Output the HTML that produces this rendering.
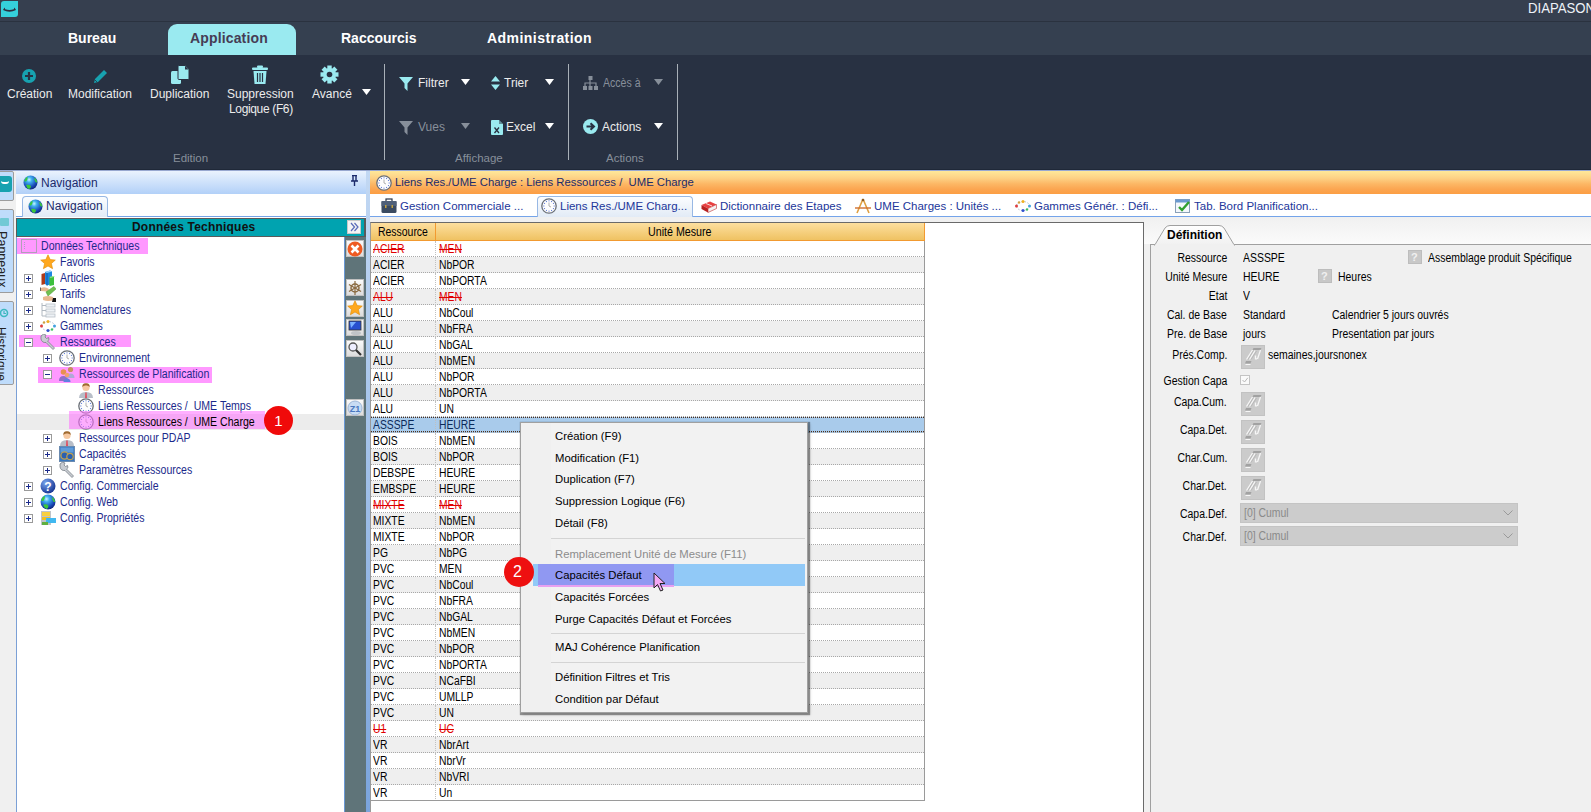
<!DOCTYPE html>
<html><head><meta charset="utf-8"><style>
*{box-sizing:border-box;margin:0;padding:0}
html,body{width:1591px;height:812px;overflow:hidden;background:#f0f0f0;font-family:"Liberation Sans",sans-serif;position:relative}
.a{position:absolute}
.t{position:absolute;white-space:nowrap;line-height:1}
.tab{font-weight:bold;font-size:14px}
</style></head><body>
<div class="a" style="left:0;top:0;width:1591px;height:21px;background:#363f4f"></div>
<div class="a" style="left:0;top:21px;width:1591px;height:1px;background:#2a323f"></div>
<svg class="a" style="left:1px;top:1px" width="17" height="16"><path d="M0 3Q0 0 3 0H17V13Q17 16 14 16H0Z" fill="#35d0dc"/><path d="M3.5 6.5L4.2 8.2Q8.5 9.8 12.8 8.2L13.5 6.5L15 9Q8.5 12.5 2 9Z" fill="#2c2f40"/></svg>
<div class="t" style="left:1528px;top:1px;font-size:14px;color:#eef2f8;transform:scaleX(0.94);transform-origin:0 0">DIAPASON</div>
<div class="a" style="left:0;top:22px;width:1591px;height:33px;background:#354050"></div>
<div class="a" style="left:168px;top:24px;width:127.5px;height:32px;background:#9aeaf0;border-radius:9px 9px 0 0"></div>
<div class="t tab" style="left:68px;top:31px;color:#fff;letter-spacing:0px">Bureau</div>
<div class="t tab" style="left:190px;top:31px;color:#463c55;letter-spacing:0.15px">Application</div>
<div class="t tab" style="left:341px;top:31px;color:#fff;letter-spacing:0px">Raccourcis</div>
<div class="t tab" style="left:487px;top:31px;color:#fff;letter-spacing:0.45px">Administration</div>
<div class="a" style="left:0;top:55px;width:1591px;height:115px;background:#283142"></div>
<div class="a" style="left:384px;top:64px;width:1px;height:96px;background:#a9b0b8"></div>
<div class="a" style="left:568px;top:64px;width:1px;height:96px;background:#a9b0b8"></div>
<div class="a" style="left:677px;top:64px;width:1px;height:96px;background:#a9b0b8"></div>
<svg class="a" style="left:22px;top:69px" width="14" height="14"><circle cx="7" cy="7" r="7" fill="#17a2b0"/><path d="M7 3V11M3 7H11" stroke="#283142" stroke-width="2.2"/></svg>
<div class="t" style="left:7px;top:88px;font-size:12px;color:#ececec;">Création</div>
<svg class="a" style="left:93px;top:68px" width="16" height="16"><path d="M1 15L2 11L11 2L14 5L5 14Z" fill="#17a2b0"/><path d="M2.2 12.2L3.8 13.8" stroke="#283142" stroke-width="1"/></svg>
<div class="t" style="left:68px;top:88px;font-size:12px;color:#ececec;">Modification</div>
<svg class="a" style="left:170px;top:65px" width="20" height="20"><rect x="1" y="6" width="10" height="13" rx="1.5" fill="#9aeaf0"/><path d="M8 1.5Q8 0.5 9 0.5H15L19 4.5V13.5Q19 14.5 18 14.5H9Q8 14.5 8 13.5Z" fill="#9aeaf0" stroke="#283142" stroke-width="1"/><path d="M15 1V4.5H18.5" fill="#283142"/></svg>
<div class="t" style="left:150px;top:88px;font-size:12px;color:#ececec;">Duplication</div>
<svg class="a" style="left:251px;top:65px" width="18" height="20"><rect x="1" y="2.5" width="16" height="2.5" rx="1" fill="#9aeaf0"/><rect x="6" y="0.5" width="6" height="2.5" rx="1" fill="#9aeaf0"/><path d="M2.5 6H15.5L14.5 19H3.5Z" fill="#9aeaf0"/><path d="M6.5 8V17M9 8V17M11.5 8V17" stroke="#283142" stroke-width="1.2"/></svg>
<div class="t" style="left:227px;top:88px;font-size:12px;color:#ececec;">Suppression</div>
<div class="t" style="left:229px;top:103px;font-size:12px;color:#ececec;letter-spacing:-0.35px">Logique (F6)</div>
<svg class="a" style="left:320px;top:65px" width="19" height="19" viewBox="-9.5 -9.5 19 19"><g fill="#9aeaf0"><rect x="-2.2" y="-9" width="4.4" height="5" transform="rotate(0)"/><rect x="-2.2" y="-9" width="4.4" height="5" transform="rotate(45)"/><rect x="-2.2" y="-9" width="4.4" height="5" transform="rotate(90)"/><rect x="-2.2" y="-9" width="4.4" height="5" transform="rotate(135)"/><rect x="-2.2" y="-9" width="4.4" height="5" transform="rotate(180)"/><rect x="-2.2" y="-9" width="4.4" height="5" transform="rotate(225)"/><rect x="-2.2" y="-9" width="4.4" height="5" transform="rotate(270)"/><rect x="-2.2" y="-9" width="4.4" height="5" transform="rotate(315)"/><circle r="6.5"/></g><circle r="2.8" fill="#283142"/></svg>
<div class="t" style="left:312px;top:88px;font-size:12px;color:#ececec;">Avancé</div>
<svg class="a" style="left:362px;top:89px" width="9" height="6"><path d="M0 0H9L4.5 6Z" fill="#fff"/></svg>
<svg class="a" style="left:399px;top:77px" width="14" height="14"><path d="M0 0H14L8.5 6.5V14L5.5 11V6.5Z" fill="#9aeaf0"/></svg>
<div class="t" style="left:418px;top:77px;font-size:12px;color:#ececec;">Filtrer</div>
<svg class="a" style="left:461px;top:79px" width="9" height="6"><path d="M0 0H9L4.5 6Z" fill="#fff"/></svg>
<svg class="a" style="left:491px;top:76px" width="9" height="14"><path d="M4.5 0L9 5.5H0Z M4.5 14L9 8.5H0Z" fill="#9aeaf0"/></svg>
<div class="t" style="left:504px;top:77px;font-size:12px;color:#ececec;">Trier</div>
<svg class="a" style="left:545px;top:79px" width="9" height="6"><path d="M0 0H9L4.5 6Z" fill="#fff"/></svg>
<svg class="a" style="left:399px;top:121px" width="14" height="14"><path d="M0 0H14L8.5 6.5V14L5.5 11V6.5Z" fill="#878f9a"/></svg>
<div class="t" style="left:418px;top:121px;font-size:12px;color:#878f9a;">Vues</div>
<svg class="a" style="left:461px;top:123px" width="9" height="6"><path d="M0 0H9L4.5 6Z" fill="#878f9a"/></svg>
<svg class="a" style="left:491px;top:120px" width="12" height="15"><path d="M0 1Q0 0 1 0H8L12 4V14Q12 15 11 15H1Q0 15 0 14Z" fill="#9aeaf0"/><path d="M8 0V4H12" fill="#283142" opacity="0.5"/><path d="M3.5 7.5L8 13M8 7.5L3.5 13" stroke="#283142" stroke-width="1.3"/></svg>
<div class="t" style="left:506px;top:121px;font-size:12px;color:#ececec;">Excel</div>
<svg class="a" style="left:545px;top:123px" width="9" height="6"><path d="M0 0H9L4.5 6Z" fill="#fff"/></svg>
<svg class="a" style="left:583px;top:76px" width="15" height="14"><g fill="#878f9a"><rect x="5.5" y="0" width="4" height="4"/><rect x="0" y="10" width="4" height="4"/><rect x="5.5" y="10" width="4" height="4"/><rect x="11" y="10" width="4" height="4"/><path d="M7 4V10M2 10V7H13V10" stroke="#878f9a" stroke-width="1.2" fill="none"/></g></svg>
<div class="t" style="left:603px;top:77px;font-size:12px;color:#878f9a;transform:scaleX(0.88);transform-origin:0 0">Accès à</div>
<svg class="a" style="left:654px;top:79px" width="9" height="6"><path d="M0 0H9L4.5 6Z" fill="#878f9a"/></svg>
<svg class="a" style="left:583px;top:119px" width="15" height="15"><circle cx="7.5" cy="7.5" r="7.5" fill="#9aeaf0"/><path d="M3.5 7.5H10.5M7.5 4.2L11 7.5L7.5 10.8" stroke="#283142" stroke-width="2" fill="none"/></svg>
<div class="t" style="left:602px;top:121px;font-size:12px;color:#ececec;">Actions</div>
<svg class="a" style="left:654px;top:123px" width="9" height="6"><path d="M0 0H9L4.5 6Z" fill="#fff"/></svg>
<div class="t" style="left:173px;top:152.5px;font-size:11.5px;color:#878f9a;">Edition</div>
<div class="t" style="left:455px;top:152.5px;font-size:11.5px;color:#878f9a;">Affichage</div>
<div class="t" style="left:606px;top:152.5px;font-size:11.5px;color:#878f9a;">Actions</div>
<div class="a" style="left:0;top:170px;width:16px;height:642px;background:#f0f0f0"></div>
<div class="a" style="left:-3px;top:171px;width:17px;height:30px;background:#bfdcfb;border:1px solid #9c9c9c;border-radius:2px"></div>
<div class="a" style="left:0;top:176px;width:12px;height:16px;background:#17a2b0;border-radius:0 3px 3px 0"></div>
<div class="a" style="left:1px;top:181px;width:8px;height:3px;border-bottom:2px solid #fff;border-radius:0 0 4px 4px"></div>
<div class="a" style="left:-3px;top:209px;width:17px;height:84px;background:#bfdcfb;border:1px solid #9c9c9c;border-radius:2px"></div>
<div class="a" style="left:0;top:218px;width:9px;height:8px;background:#5ec4cc;border-radius:1px;opacity:0.8"></div>
<div class="t" style="left:-26px;top:253px;font-size:12.5px;color:#222;transform:rotate(90deg);transform-origin:center">Panneaux</div>
<div class="a" style="left:-3px;top:301px;width:17px;height:84px;background:#bfdcfb;border:1px solid #9c9c9c;border-radius:2px"></div>
<svg class="a" style="left:0;top:307px" width="10" height="12"><circle cx="4" cy="6" r="3.5" fill="none" stroke="#3cb8c0" stroke-width="1.6"/><path d="M4 4V6.5H6" stroke="#3cb8c0" stroke-width="1.2" fill="none"/></svg>
<div class="t" style="left:-26px;top:348px;font-size:12px;color:#222;transform:rotate(90deg);transform-origin:center">Historique</div>
<div class="a" style="left:16px;top:171px;width:350px;height:23px;background:linear-gradient(#eaf3fe,#b2d0f8)"></div>
<svg class="a" style="left:23px;top:175px" width="15" height="15" viewBox="0 0 15 15"><defs><radialGradient id="gg1" cx="0.4" cy="0.3" r="0.75"><stop offset="0" stop-color="#c8f4ff"/><stop offset="0.25" stop-color="#40b0f0"/><stop offset="0.7" stop-color="#1a4ab8"/><stop offset="1" stop-color="#0a1e70"/></radialGradient></defs><circle cx="7.5" cy="7.5" r="7" fill="url(#gg1)"/><path d="M1.2 6Q2 3 4.5 1.5Q5 4 3.5 6Q2.5 7 1.2 6Z M3 10Q6 9 8 11Q8 13.5 6 14Q3.5 13 3 10Z M11.5 2.5Q14 4.5 14.3 7.5Q12.5 8 12 6Q11 4 11.5 2.5Z" fill="#3cc83c"/></svg>
<div class="t" style="left:41px;top:177px;font-size:12px;color:#1b2a6b">Navigation</div>
<svg class="a" style="left:350px;top:175px" width="9" height="11"><path d="M2 0.5H7M3 0.5V6M6 0.5V6M1 6H8M4.5 6V11" stroke="#1b2a6b" stroke-width="1.4" fill="none"/></svg>
<div class="a" style="left:16px;top:194px;width:350px;height:23px;background:#fff"></div>
<div class="a" style="left:16px;top:216px;width:350px;height:1px;background:#74a4ea"></div>
<div class="a" style="left:22px;top:196px;width:86px;height:21px;background:linear-gradient(#fbfdff,#e2ebf6);border:1px solid #98b8e4;border-bottom:none;border-radius:4px 4px 0 0"></div>
<svg class="a" style="left:28px;top:199px" width="15" height="15" viewBox="0 0 15 15"><defs><radialGradient id="gg2" cx="0.4" cy="0.3" r="0.75"><stop offset="0" stop-color="#c8f4ff"/><stop offset="0.25" stop-color="#40b0f0"/><stop offset="0.7" stop-color="#1a4ab8"/><stop offset="1" stop-color="#0a1e70"/></radialGradient></defs><circle cx="7.5" cy="7.5" r="7" fill="url(#gg2)"/><path d="M1.2 6Q2 3 4.5 1.5Q5 4 3.5 6Q2.5 7 1.2 6Z M3 10Q6 9 8 11Q8 13.5 6 14Q3.5 13 3 10Z M11.5 2.5Q14 4.5 14.3 7.5Q12.5 8 12 6Q11 4 11.5 2.5Z" fill="#3cc83c"/></svg>
<div class="t" style="left:46px;top:200px;font-size:12px;color:#1b2a6b">Navigation</div>
<div class="a" style="left:16px;top:217px;width:350px;height:1px;background:#fff"></div>
<div class="a" style="left:16px;top:218px;width:350px;height:19px;background:#00a3b0;border:1px solid #5a5a5a;border-right:2px solid #5a5a5a"></div>
<div class="t" style="left:132px;top:221px;font-size:12px;font-weight:bold;color:#111;letter-spacing:0.2px">Données Techniques</div>
<div class="a" style="left:347px;top:220px;width:14px;height:14px;background:#f4f4f4;border:1px solid #c8c8c8"></div>
<svg class="a" style="left:349px;top:221px" width="11" height="12"><path d="M2 2L5.5 6L2 10M5.5 2L9 6L5.5 10" stroke="#5a6ab8" stroke-width="1.2" fill="none"/></svg>
<div class="a" style="left:16px;top:237px;width:328px;height:575px;background:#fff;border-left:1px solid #7ba0d6"></div>
<div class="a" style="left:17px;top:414px;width:327px;height:16px;background:#ececec"></div>
<div class="a" style="left:344px;top:237px;width:22px;height:575px;background:#5f7479;border-left:1px solid #6a98d4"></div>
<div class="a" style="left:366px;top:170px;width:4px;height:642px;background:linear-gradient(#c2d8f3,#7aa4dc)"></div>
<div class="a" style="left:346px;top:240px;width:18px;height:17px;background:linear-gradient(#fafafa,#dcdcdc);border:1px solid #c0c0c0"></div>
<div class="a" style="left:346px;top:279px;width:18px;height:17px;background:linear-gradient(#fafafa,#dcdcdc);border:1px solid #c0c0c0"></div>
<div class="a" style="left:346px;top:300px;width:18px;height:17px;background:linear-gradient(#fafafa,#dcdcdc);border:1px solid #c0c0c0"></div>
<div class="a" style="left:346px;top:319px;width:18px;height:17px;background:linear-gradient(#fafafa,#dcdcdc);border:1px solid #c0c0c0"></div>
<div class="a" style="left:346px;top:340px;width:18px;height:17px;background:linear-gradient(#fafafa,#dcdcdc);border:1px solid #c0c0c0"></div>
<div class="a" style="left:346px;top:399px;width:18px;height:17px;background:linear-gradient(#fafafa,#dcdcdc);border:1px solid #c0c0c0"></div>
<svg class="a" style="left:347px;top:241px" width="16" height="16"><circle cx="8" cy="8" r="7.5" fill="#ee5a22"/><path d="M4.5 4.5L11.5 11.5M11.5 4.5L4.5 11.5" stroke="#fff" stroke-width="2.6"/></svg>
<svg class="a" style="left:347px;top:280px" width="16" height="16"><circle cx="8" cy="8" r="4" fill="none" stroke="#8a6a40" stroke-width="1.5"/><rect x="7.4" y="1" width="1.2" height="14" fill="#8a6a40" transform="rotate(0 8 8)"/><rect x="7.4" y="1" width="1.2" height="14" fill="#8a6a40" transform="rotate(60 8 8)"/><rect x="7.4" y="1" width="1.2" height="14" fill="#8a6a40" transform="rotate(120 8 8)"/></svg>
<svg class="a" style="left:347px;top:300px" width="16" height="16" viewBox="0 0 16 16"><path d="M8 0.8L10.2 5.6L15.3 6.1L11.4 9.5L12.6 14.7L8 12L3.4 14.7L4.6 9.5L0.7 6.1L5.8 5.6Z" fill="#ffa81e" stroke="#e08a00" stroke-width="0.6"/></svg>
<svg class="a" style="left:347px;top:320px" width="16" height="16"><rect x="2" y="1" width="12" height="9" fill="#2850d0" stroke="#333" stroke-width="0.8"/><path d="M3 2L9 2L4 8Z" fill="#7ab0ff"/><ellipse cx="9" cy="13" rx="5" ry="2" fill="#c0c4c8"/></svg>
<svg class="a" style="left:347px;top:341px" width="16" height="16"><circle cx="6" cy="6" r="4" fill="#eef" stroke="#555" stroke-width="1.3"/><path d="M9 9L14 14" stroke="#333" stroke-width="2.2"/></svg>
<svg class="a" style="left:347px;top:400px" width="16" height="16"><circle cx="8" cy="8" r="7" fill="#c8dcf4" stroke="#a0b8d8"/><text x="8" y="11.5" font-family="Liberation Sans" font-weight="bold" font-size="9" fill="#4a78c0" text-anchor="middle">Z1</text></svg>
<div class="a" style="left:17px;top:238px;width:131px;height:16px;background:#ff99ff"></div>
<div class="a" style="left:19px;top:335px;width:112px;height:12px;background:#ff99ff"></div>
<div class="a" style="left:38px;top:367px;width:174px;height:16px;background:#ff99ff"></div>
<svg class="a" style="left:21px;top:238px" width="16" height="16"><rect x="0.5" y="1.5" width="15" height="13" fill="none" stroke="#b0a0b8" stroke-width="1"/><path d="M3.5 4V12" stroke="#b0a0c8" stroke-width="1" stroke-dasharray="1 1"/></svg>
<div class="t" style="left:41px;top:239.6px;font-size:12px;transform:scaleX(0.88);transform-origin:0 0;color:#1b2a8b">Données Techniques</div>
<svg class="a" style="left:40px;top:254px" width="16" height="16" viewBox="0 0 16 16"><path d="M8 0.8L10.2 5.6L15.3 6.1L11.4 9.5L12.6 14.7L8 12L3.4 14.7L4.6 9.5L0.7 6.1L5.8 5.6Z" fill="#ffa81e" stroke="#e08a00" stroke-width="0.6"/></svg>
<div class="t" style="left:60px;top:255.6px;font-size:12px;transform:scaleX(0.88);transform-origin:0 0;color:#1b2a8b">Favoris</div>
<div class="a" style="left:24px;top:274px;width:9px;height:9px;border:1px solid #9a9a9a;background:#fff"></div>
<div class="a" style="left:26px;top:278px;width:5px;height:1px;background:#1b2a8b"></div>
<div class="a" style="left:28px;top:276px;width:1px;height:5px;background:#1b2a8b"></div>
<svg class="a" style="left:40px;top:270px" width="16" height="16"><path d="M1.5 4L5 3V14L1.5 15Z" fill="#b03a18"/><path d="M5 2L10 0.5L12 1.5V14L7 15.5L5 14Z" fill="#1e88e0"/><path d="M5 2L10 0.5L12 1.5L7 3Z" fill="#9ad0f8"/><path d="M7 3V15.5" stroke="#0a50a0" stroke-width="0.8"/><path d="M9.5 7L14 6V15L9.5 16Z" fill="#3cc03c"/><path d="M9.5 7L14 6L15 6.8L10.5 7.8Z" fill="#b0f0a0"/></svg>
<div class="t" style="left:60px;top:271.6px;font-size:12px;transform:scaleX(0.88);transform-origin:0 0;color:#1b2a8b">Articles</div>
<div class="a" style="left:24px;top:290px;width:9px;height:9px;border:1px solid #9a9a9a;background:#fff"></div>
<div class="a" style="left:26px;top:294px;width:5px;height:1px;background:#1b2a8b"></div>
<div class="a" style="left:28px;top:292px;width:1px;height:5px;background:#1b2a8b"></div>
<svg class="a" style="left:40px;top:286px" width="16" height="16"><path d="M0 1.5V5" stroke="#111" stroke-width="1.3"/><path d="M1 2Q5 0 9 3L8 6Q4 5 1 5Z" fill="#e8b890"/><path d="M6 6L14 0.5L16 3L8 10Z" fill="#70c050" stroke="#4a9a30" stroke-width="0.5"/><path d="M3 11Q8 9 13 11L14 14Q8 16 3 14Z" fill="#e8b890"/><path d="M13 12L16 12V16H12Z" fill="#111"/></svg>
<div class="t" style="left:60px;top:287.6px;font-size:12px;transform:scaleX(0.88);transform-origin:0 0;color:#1b2a8b">Tarifs</div>
<div class="a" style="left:24px;top:306px;width:9px;height:9px;border:1px solid #9a9a9a;background:#fff"></div>
<div class="a" style="left:26px;top:310px;width:5px;height:1px;background:#1b2a8b"></div>
<div class="a" style="left:28px;top:308px;width:1px;height:5px;background:#1b2a8b"></div>
<svg class="a" style="left:40px;top:302px" width="16" height="16"><rect x="6" y="2" width="9" height="3" fill="#eef2f6" stroke="#b8c0c8" stroke-width="0.8"/><rect x="6" y="7" width="9" height="3" fill="#eef2f6" stroke="#b8c0c8" stroke-width="0.8"/><rect x="6" y="12" width="9" height="3" fill="#eef2f6" stroke="#b8c0c8" stroke-width="0.8"/><path d="M2 1V14H6M2 8.5H6M2 3.5H6" stroke="#b0b8c0" stroke-width="1" fill="none"/></svg>
<div class="t" style="left:60px;top:303.6px;font-size:12px;transform:scaleX(0.88);transform-origin:0 0;color:#1b2a8b">Nomenclatures</div>
<div class="a" style="left:24px;top:322px;width:9px;height:9px;border:1px solid #9a9a9a;background:#fff"></div>
<div class="a" style="left:26px;top:326px;width:5px;height:1px;background:#1b2a8b"></div>
<div class="a" style="left:28px;top:324px;width:1px;height:5px;background:#1b2a8b"></div>
<svg class="a" style="left:40px;top:318px" width="16" height="16"><ellipse cx="8" cy="8" rx="6.5" ry="4.5" fill="none" stroke="#b0c0d0" stroke-width="1" stroke-dasharray="1.5 1.5"/><circle cx="1.5" cy="8" r="1.5" fill="#e04040"/><circle cx="14.5" cy="8" r="1.5" fill="#40a0e0"/><circle cx="8" cy="3.5" r="1.5" fill="#f0b020"/><circle cx="8" cy="12.5" r="1.5" fill="#3050d0"/><circle cx="4" cy="4.5" r="1.2" fill="#d0a040"/><circle cx="12" cy="11.5" r="1.2" fill="#40c060"/></svg>
<div class="t" style="left:60px;top:319.6px;font-size:12px;transform:scaleX(0.88);transform-origin:0 0;color:#1b2a8b">Gammes</div>
<div class="a" style="left:24px;top:338px;width:9px;height:9px;border:1px solid #9a9a9a;background:#fff"></div>
<div class="a" style="left:26px;top:342px;width:5px;height:1px;background:#1b2a8b"></div>
<svg class="a" style="left:40px;top:334px" width="16" height="16"><path d="M1 2Q3 -1 6 1L5 3L6.5 4.5L8.5 3.5Q10 6 7.5 7L14.5 14L13 15.5L6 8.5Q2 9 1 5Z" fill="#c8ccd2" stroke="#7a8088" stroke-width="0.8"/></svg>
<div class="t" style="left:60px;top:335.6px;font-size:12px;transform:scaleX(0.88);transform-origin:0 0;color:#1b2a8b">Ressources</div>
<div class="a" style="left:43px;top:354px;width:9px;height:9px;border:1px solid #9a9a9a;background:#fff"></div>
<div class="a" style="left:45px;top:358px;width:5px;height:1px;background:#1b2a8b"></div>
<div class="a" style="left:47px;top:356px;width:1px;height:5px;background:#1b2a8b"></div>
<svg class="a" style="left:59px;top:350px" width="16" height="16" viewBox="0 0 16 16"><circle cx="8" cy="8" r="7.2" fill="#fdfdfd" stroke="#6b7078" stroke-width="1.3"/><rect x="7.6" y="2.2" width="0.8" height="1.2" fill="#4a6ad0" transform="rotate(0 8 8)"/><rect x="7.6" y="2.2" width="0.8" height="1.2" fill="#4a6ad0" transform="rotate(30 8 8)"/><rect x="7.6" y="2.2" width="0.8" height="1.2" fill="#4a6ad0" transform="rotate(60 8 8)"/><rect x="7.6" y="2.2" width="0.8" height="1.2" fill="#4a6ad0" transform="rotate(90 8 8)"/><rect x="7.6" y="2.2" width="0.8" height="1.2" fill="#4a6ad0" transform="rotate(120 8 8)"/><rect x="7.6" y="2.2" width="0.8" height="1.2" fill="#4a6ad0" transform="rotate(150 8 8)"/><rect x="7.6" y="2.2" width="0.8" height="1.2" fill="#4a6ad0" transform="rotate(180 8 8)"/><rect x="7.6" y="2.2" width="0.8" height="1.2" fill="#4a6ad0" transform="rotate(210 8 8)"/><rect x="7.6" y="2.2" width="0.8" height="1.2" fill="#4a6ad0" transform="rotate(240 8 8)"/><rect x="7.6" y="2.2" width="0.8" height="1.2" fill="#4a6ad0" transform="rotate(270 8 8)"/><rect x="7.6" y="2.2" width="0.8" height="1.2" fill="#4a6ad0" transform="rotate(300 8 8)"/><rect x="7.6" y="2.2" width="0.8" height="1.2" fill="#4a6ad0" transform="rotate(330 8 8)"/><path d="M8 8V4.5M8 8L10 9" stroke="#999" stroke-width="0.8"/></svg>
<div class="t" style="left:79px;top:351.6px;font-size:12px;transform:scaleX(0.88);transform-origin:0 0;color:#1b2a8b">Environnement</div>
<div class="a" style="left:43px;top:370px;width:9px;height:9px;border:1px solid #9a9a9a;background:#fff"></div>
<div class="a" style="left:45px;top:374px;width:5px;height:1px;background:#1b2a8b"></div>
<svg class="a" style="left:59px;top:366px" width="16" height="16"><circle cx="4.5" cy="6" r="2.8" fill="#e89050"/><path d="M0 15Q0 10 4.5 10Q9 10 9 15Z" fill="#9070c8"/><circle cx="11.5" cy="3.5" r="2.6" fill="#c89060"/><path d="M7.5 12Q7.5 7.5 11.5 7.5Q15.5 7.5 15.5 12Z" fill="#b0a8d8"/><circle cx="8" cy="9" r="2.3" fill="#f0a070"/><path d="M4.5 16Q4.5 12.5 8 12.5Q11.5 12.5 11.5 16Z" fill="#6080e0"/></svg>
<div class="t" style="left:79px;top:367.6px;font-size:12px;transform:scaleX(0.88);transform-origin:0 0;color:#1b2a8b">Ressources de Planification</div>
<svg class="a" style="left:78px;top:382px" width="16" height="16"><path d="M1 16Q1 10 8 10Q15 10 15 16Z" fill="#b8bec8"/><path d="M7.3 10.5H8.7L9 16H7Z" fill="#e05060"/><circle cx="8" cy="5.5" r="3.6" fill="#f6c8a0"/><path d="M4.3 5Q4 1 8 1.2Q12 1 11.7 5Q10 3 8 3.5Q6 3 4.3 5Z" fill="#a06a30"/></svg>
<div class="t" style="left:98px;top:383.6px;font-size:12px;transform:scaleX(0.88);transform-origin:0 0;color:#1b2a8b">Ressources</div>
<svg class="a" style="left:78px;top:398px" width="16" height="16" viewBox="0 0 16 16"><circle cx="8" cy="8" r="7.2" fill="#fdfdfd" stroke="#6b7078" stroke-width="1.3"/><rect x="7.6" y="2.2" width="0.8" height="1.2" fill="#4a6ad0" transform="rotate(0 8 8)"/><rect x="7.6" y="2.2" width="0.8" height="1.2" fill="#4a6ad0" transform="rotate(30 8 8)"/><rect x="7.6" y="2.2" width="0.8" height="1.2" fill="#4a6ad0" transform="rotate(60 8 8)"/><rect x="7.6" y="2.2" width="0.8" height="1.2" fill="#4a6ad0" transform="rotate(90 8 8)"/><rect x="7.6" y="2.2" width="0.8" height="1.2" fill="#4a6ad0" transform="rotate(120 8 8)"/><rect x="7.6" y="2.2" width="0.8" height="1.2" fill="#4a6ad0" transform="rotate(150 8 8)"/><rect x="7.6" y="2.2" width="0.8" height="1.2" fill="#4a6ad0" transform="rotate(180 8 8)"/><rect x="7.6" y="2.2" width="0.8" height="1.2" fill="#4a6ad0" transform="rotate(210 8 8)"/><rect x="7.6" y="2.2" width="0.8" height="1.2" fill="#4a6ad0" transform="rotate(240 8 8)"/><rect x="7.6" y="2.2" width="0.8" height="1.2" fill="#4a6ad0" transform="rotate(270 8 8)"/><rect x="7.6" y="2.2" width="0.8" height="1.2" fill="#4a6ad0" transform="rotate(300 8 8)"/><rect x="7.6" y="2.2" width="0.8" height="1.2" fill="#4a6ad0" transform="rotate(330 8 8)"/><path d="M8 8V4.5M8 8L10 9" stroke="#999" stroke-width="0.8"/></svg>
<div class="t" style="left:98px;top:399.6px;font-size:12px;transform:scaleX(0.88);transform-origin:0 0;color:#1b2a8b">Liens Ressources / &nbsp;UME Temps</div>
<svg class="a" style="left:78px;top:414px" width="16" height="16" viewBox="0 0 16 16"><circle cx="8" cy="8" r="7.2" fill="#fdfdfd" stroke="#6b7078" stroke-width="1.3"/><rect x="7.6" y="2.2" width="0.8" height="1.2" fill="#4a6ad0" transform="rotate(0 8 8)"/><rect x="7.6" y="2.2" width="0.8" height="1.2" fill="#4a6ad0" transform="rotate(30 8 8)"/><rect x="7.6" y="2.2" width="0.8" height="1.2" fill="#4a6ad0" transform="rotate(60 8 8)"/><rect x="7.6" y="2.2" width="0.8" height="1.2" fill="#4a6ad0" transform="rotate(90 8 8)"/><rect x="7.6" y="2.2" width="0.8" height="1.2" fill="#4a6ad0" transform="rotate(120 8 8)"/><rect x="7.6" y="2.2" width="0.8" height="1.2" fill="#4a6ad0" transform="rotate(150 8 8)"/><rect x="7.6" y="2.2" width="0.8" height="1.2" fill="#4a6ad0" transform="rotate(180 8 8)"/><rect x="7.6" y="2.2" width="0.8" height="1.2" fill="#4a6ad0" transform="rotate(210 8 8)"/><rect x="7.6" y="2.2" width="0.8" height="1.2" fill="#4a6ad0" transform="rotate(240 8 8)"/><rect x="7.6" y="2.2" width="0.8" height="1.2" fill="#4a6ad0" transform="rotate(270 8 8)"/><rect x="7.6" y="2.2" width="0.8" height="1.2" fill="#4a6ad0" transform="rotate(300 8 8)"/><rect x="7.6" y="2.2" width="0.8" height="1.2" fill="#4a6ad0" transform="rotate(330 8 8)"/><path d="M8 8V4.5M8 8L10 9" stroke="#999" stroke-width="0.8"/></svg>
<div class="a" style="left:69px;top:411px;width:196px;height:18px;background:rgba(255,110,255,0.55)"></div>
<div class="t" style="left:98px;top:415.6px;font-size:12px;transform:scaleX(0.88);transform-origin:0 0;color:#000">Liens Ressources / &nbsp;UME Charge</div>
<div class="a" style="left:43px;top:434px;width:9px;height:9px;border:1px solid #9a9a9a;background:#fff"></div>
<div class="a" style="left:45px;top:438px;width:5px;height:1px;background:#1b2a8b"></div>
<div class="a" style="left:47px;top:436px;width:1px;height:5px;background:#1b2a8b"></div>
<svg class="a" style="left:59px;top:430px" width="16" height="16"><path d="M1 16Q1 10 8 10Q15 10 15 16Z" fill="#b8bec8"/><path d="M7.3 10.5H8.7L9 16H7Z" fill="#e05060"/><circle cx="8" cy="5.5" r="3.6" fill="#f6c8a0"/><path d="M4.3 5Q4 1 8 1.2Q12 1 11.7 5Q10 3 8 3.5Q6 3 4.3 5Z" fill="#a06a30"/></svg>
<div class="t" style="left:79px;top:431.6px;font-size:12px;transform:scaleX(0.88);transform-origin:0 0;color:#1b2a8b">Ressources pour PDAP</div>
<div class="a" style="left:43px;top:450px;width:9px;height:9px;border:1px solid #9a9a9a;background:#fff"></div>
<div class="a" style="left:45px;top:454px;width:5px;height:1px;background:#1b2a8b"></div>
<div class="a" style="left:47px;top:452px;width:1px;height:5px;background:#1b2a8b"></div>
<svg class="a" style="left:59px;top:446px" width="16" height="16"><rect x="0.5" y="0.5" width="15" height="15" fill="#3a78c0" stroke="#6a8ab0"/><rect x="1.5" y="1.5" width="13" height="5" fill="#7ab4ea" opacity="0.6"/><circle cx="5.5" cy="9.5" r="3.6" fill="#2a60b0" stroke="#c0a050" stroke-width="1.3"/><circle cx="11" cy="10.5" r="3.2" fill="#2a60b0" stroke="#c0a050" stroke-width="1.2"/></svg>
<div class="t" style="left:79px;top:447.6px;font-size:12px;transform:scaleX(0.88);transform-origin:0 0;color:#1b2a8b">Capacités</div>
<div class="a" style="left:43px;top:466px;width:9px;height:9px;border:1px solid #9a9a9a;background:#fff"></div>
<div class="a" style="left:45px;top:470px;width:5px;height:1px;background:#1b2a8b"></div>
<div class="a" style="left:47px;top:468px;width:1px;height:5px;background:#1b2a8b"></div>
<svg class="a" style="left:59px;top:462px" width="16" height="16"><path d="M1 2Q3 -1 6 1L5 3L6.5 4.5L8.5 3.5Q10 6 7.5 7L14.5 14L13 15.5L6 8.5Q2 9 1 5Z" fill="#c8ccd2" stroke="#7a8088" stroke-width="0.8"/></svg>
<div class="t" style="left:79px;top:463.6px;font-size:12px;transform:scaleX(0.88);transform-origin:0 0;color:#1b2a8b">Paramètres Ressources</div>
<div class="a" style="left:24px;top:482px;width:9px;height:9px;border:1px solid #9a9a9a;background:#fff"></div>
<div class="a" style="left:26px;top:486px;width:5px;height:1px;background:#1b2a8b"></div>
<div class="a" style="left:28px;top:484px;width:1px;height:5px;background:#1b2a8b"></div>
<svg class="a" style="left:40px;top:478px" width="16" height="16"><defs><radialGradient id="qg" cx="0.35" cy="0.3" r="0.8"><stop offset="0" stop-color="#7aa8f0"/><stop offset="1" stop-color="#0e2a8a"/></radialGradient></defs><circle cx="8" cy="8" r="7.5" fill="url(#qg)"/><text x="8" y="12.5" font-family="Liberation Sans" font-weight="bold" font-size="12" fill="#fff" text-anchor="middle">?</text></svg>
<div class="t" style="left:60px;top:479.6px;font-size:12px;transform:scaleX(0.88);transform-origin:0 0;color:#1b2a8b">Config. Commerciale</div>
<div class="a" style="left:24px;top:498px;width:9px;height:9px;border:1px solid #9a9a9a;background:#fff"></div>
<div class="a" style="left:26px;top:502px;width:5px;height:1px;background:#1b2a8b"></div>
<div class="a" style="left:28px;top:500px;width:1px;height:5px;background:#1b2a8b"></div>
<svg class="a" style="left:40px;top:494px" width="16" height="16" viewBox="0 0 15 15"><defs><radialGradient id="gg3" cx="0.4" cy="0.3" r="0.75"><stop offset="0" stop-color="#c8f4ff"/><stop offset="0.25" stop-color="#40b0f0"/><stop offset="0.7" stop-color="#1a4ab8"/><stop offset="1" stop-color="#0a1e70"/></radialGradient></defs><circle cx="7.5" cy="7.5" r="7" fill="url(#gg3)"/><path d="M1.2 6Q2 3 4.5 1.5Q5 4 3.5 6Q2.5 7 1.2 6Z M3 10Q6 9 8 11Q8 13.5 6 14Q3.5 13 3 10Z M11.5 2.5Q14 4.5 14.3 7.5Q12.5 8 12 6Q11 4 11.5 2.5Z" fill="#3cc83c"/></svg>
<div class="t" style="left:60px;top:495.6px;font-size:12px;transform:scaleX(0.88);transform-origin:0 0;color:#1b2a8b">Config. Web</div>
<div class="a" style="left:24px;top:514px;width:9px;height:9px;border:1px solid #9a9a9a;background:#fff"></div>
<div class="a" style="left:26px;top:518px;width:5px;height:1px;background:#1b2a8b"></div>
<div class="a" style="left:28px;top:516px;width:1px;height:5px;background:#1b2a8b"></div>
<svg class="a" style="left:40px;top:510px" width="16" height="16"><rect x="1" y="1" width="10" height="14" fill="#c0c4c8"/><rect x="2" y="2" width="8" height="4" fill="#f8d040"/><rect x="2" y="7" width="8" height="3" fill="#f0c020"/><rect x="6" y="8" width="10" height="5" fill="#40b8f0"/><rect x="2" y="12" width="6" height="3" fill="#60b040"/></svg>
<div class="t" style="left:60px;top:511.6px;font-size:12px;transform:scaleX(0.88);transform-origin:0 0;color:#1b2a8b">Config. Propriétés</div>
<div class="a" style="left:0;top:169px;width:1591px;height:1px;background:#1f2838"></div>
<div class="a" style="left:0;top:170px;width:1591px;height:1px;background:#98a8d0"></div>
<div class="a" style="left:264px;top:406px;width:29px;height:29px;border-radius:50%;background:#f00a0a"></div>
<div class="t" style="left:264px;width:29px;text-align:center;top:413px;font-size:15px;color:#fff">1</div>
<div class="a" style="left:370px;top:171px;width:1221px;height:23px;background:linear-gradient(#ffe899 0%,#fdd286 30%,#fcb866 55%,#fba550 80%,#fc9e44 100%)"></div>
<svg class="a" style="left:376px;top:175px" width="16" height="16" viewBox="0 0 16 16"><circle cx="8" cy="8" r="7.2" fill="#fdfdfd" stroke="#6b7078" stroke-width="1.3"/><rect x="7.6" y="2.2" width="0.8" height="1.2" fill="#4a6ad0" transform="rotate(0 8 8)"/><rect x="7.6" y="2.2" width="0.8" height="1.2" fill="#4a6ad0" transform="rotate(30 8 8)"/><rect x="7.6" y="2.2" width="0.8" height="1.2" fill="#4a6ad0" transform="rotate(60 8 8)"/><rect x="7.6" y="2.2" width="0.8" height="1.2" fill="#4a6ad0" transform="rotate(90 8 8)"/><rect x="7.6" y="2.2" width="0.8" height="1.2" fill="#4a6ad0" transform="rotate(120 8 8)"/><rect x="7.6" y="2.2" width="0.8" height="1.2" fill="#4a6ad0" transform="rotate(150 8 8)"/><rect x="7.6" y="2.2" width="0.8" height="1.2" fill="#4a6ad0" transform="rotate(180 8 8)"/><rect x="7.6" y="2.2" width="0.8" height="1.2" fill="#4a6ad0" transform="rotate(210 8 8)"/><rect x="7.6" y="2.2" width="0.8" height="1.2" fill="#4a6ad0" transform="rotate(240 8 8)"/><rect x="7.6" y="2.2" width="0.8" height="1.2" fill="#4a6ad0" transform="rotate(270 8 8)"/><rect x="7.6" y="2.2" width="0.8" height="1.2" fill="#4a6ad0" transform="rotate(300 8 8)"/><rect x="7.6" y="2.2" width="0.8" height="1.2" fill="#4a6ad0" transform="rotate(330 8 8)"/><path d="M8 8V4.5M8 8L10 9" stroke="#999" stroke-width="0.8"/></svg>
<div class="t" style="left:395px;top:177px;font-size:11.3px;color:#1b2a6b">Liens Res./UME Charge : Liens Ressources / &nbsp;UME Charge</div>
<div class="a" style="left:370px;top:194px;width:1221px;height:22px;background:#fff"></div>
<div class="a" style="left:370px;top:216px;width:1221px;height:1px;background:#74a4ea"></div>
<div class="a" style="left:537px;top:196px;width:156px;height:21px;background:linear-gradient(#fbfdff,#e2ebf6);border:1px solid #98b8e4;border-bottom:none;border-radius:4px 4px 0 0"></div>
<svg class="a" style="left:381px;top:198px" width="16" height="16"><rect x="0.5" y="3" width="15" height="12" rx="1.5" fill="#3a4a60"/><rect x="5" y="1" width="6" height="3" fill="none" stroke="#2a3448" stroke-width="1.2"/><rect x="0.5" y="3" width="15" height="5" fill="#4e5f78"/><rect x="4" y="7" width="1.5" height="3" fill="#c0a040"/><rect x="10.5" y="7" width="1.5" height="3" fill="#c0a040"/></svg>
<div class="t" style="left:400px;top:201px;font-size:11.5px;color:#22369a">Gestion Commerciale ...</div>
<svg class="a" style="left:541px;top:198px" width="16" height="16" viewBox="0 0 16 16"><circle cx="8" cy="8" r="7.2" fill="#fdfdfd" stroke="#6b7078" stroke-width="1.3"/><rect x="7.6" y="2.2" width="0.8" height="1.2" fill="#4a6ad0" transform="rotate(0 8 8)"/><rect x="7.6" y="2.2" width="0.8" height="1.2" fill="#4a6ad0" transform="rotate(30 8 8)"/><rect x="7.6" y="2.2" width="0.8" height="1.2" fill="#4a6ad0" transform="rotate(60 8 8)"/><rect x="7.6" y="2.2" width="0.8" height="1.2" fill="#4a6ad0" transform="rotate(90 8 8)"/><rect x="7.6" y="2.2" width="0.8" height="1.2" fill="#4a6ad0" transform="rotate(120 8 8)"/><rect x="7.6" y="2.2" width="0.8" height="1.2" fill="#4a6ad0" transform="rotate(150 8 8)"/><rect x="7.6" y="2.2" width="0.8" height="1.2" fill="#4a6ad0" transform="rotate(180 8 8)"/><rect x="7.6" y="2.2" width="0.8" height="1.2" fill="#4a6ad0" transform="rotate(210 8 8)"/><rect x="7.6" y="2.2" width="0.8" height="1.2" fill="#4a6ad0" transform="rotate(240 8 8)"/><rect x="7.6" y="2.2" width="0.8" height="1.2" fill="#4a6ad0" transform="rotate(270 8 8)"/><rect x="7.6" y="2.2" width="0.8" height="1.2" fill="#4a6ad0" transform="rotate(300 8 8)"/><rect x="7.6" y="2.2" width="0.8" height="1.2" fill="#4a6ad0" transform="rotate(330 8 8)"/><path d="M8 8V4.5M8 8L10 9" stroke="#999" stroke-width="0.8"/></svg>
<div class="t" style="left:560px;top:201px;font-size:11.5px;color:#22369a">Liens Res./UME Charg...</div>
<svg class="a" style="left:701px;top:198px" width="16" height="16"><path d="M0.5 7L9 3.5L15.5 6.5L7 10.5Z" fill="#e84040"/><path d="M0.5 7L7 10.5V14.5L0.5 11Z" fill="#b82020"/><path d="M7 10.5L15.5 6.5V10.5L7 14.5Z" fill="#f4f0f0" stroke="#c03030" stroke-width="0.6"/><path d="M5 5.5L11 8" stroke="#fff" stroke-width="0.8"/></svg>
<div class="t" style="left:720px;top:201px;font-size:11.5px;color:#22369a">Dictionnaire des Etapes</div>
<svg class="a" style="left:855px;top:198px" width="16" height="16"><path d="M8 1L2 15M8 1L14 15" stroke="#e0a040" stroke-width="1.6" fill="none"/><path d="M0 10H16" stroke="#d07030" stroke-width="1.4"/><circle cx="8" cy="2" r="1.3" fill="#8a5a20"/></svg>
<div class="t" style="left:874px;top:201px;font-size:11.5px;color:#22369a">UME Charges : Unités ...</div>
<svg class="a" style="left:1015px;top:198px" width="16" height="16"><ellipse cx="8" cy="8" rx="6.5" ry="4.5" fill="none" stroke="#b0c0d0" stroke-width="1" stroke-dasharray="1.5 1.5"/><circle cx="1.5" cy="8" r="1.5" fill="#e04040"/><circle cx="14.5" cy="8" r="1.5" fill="#40a0e0"/><circle cx="8" cy="3.5" r="1.5" fill="#f0b020"/><circle cx="8" cy="12.5" r="1.5" fill="#3050d0"/><circle cx="4" cy="4.5" r="1.2" fill="#d0a040"/><circle cx="12" cy="11.5" r="1.2" fill="#40c060"/></svg>
<div class="t" style="left:1034px;top:201px;font-size:11.5px;color:#22369a">Gammes Génér. : Défi...</div>
<svg class="a" style="left:1175px;top:198px" width="16" height="16"><rect x="0.5" y="1.5" width="14" height="13" fill="#f4f8fc" stroke="#8aa0b8"/><rect x="0.5" y="1.5" width="14" height="3" fill="#6a9ad0"/><path d="M4 9L7 12L14 4" stroke="#30a030" stroke-width="2.4" fill="none"/></svg>
<div class="t" style="left:1194px;top:201px;font-size:11.5px;color:#22369a">Tab. Bord Planification...</div>
<div class="a" style="left:370px;top:217px;width:1221px;height:595px;background:#f0f0f0"></div>
<div class="a" style="left:370px;top:222px;width:774px;height:600px;background:#fff;border-top:1px solid #6a6a6a;border-right:1px solid #6a6a6a;border-left:1px solid #9a9a9a"></div>
<div class="a" style="left:371px;top:223px;width:554px;height:18px;background:linear-gradient(#fddf9f,#efc262);border-bottom:1px solid #f29a30;border-right:1px solid #f29a30"></div>
<div class="a" style="left:435px;top:223px;width:1px;height:18px;background:#f29a30"></div>
<div class="t" style="left:378px;top:225.5px;font-size:12px;color:#000;transform:scaleX(0.87);transform-origin:0 0">Ressource</div>
<div class="t" style="left:648px;top:225.5px;font-size:12px;color:#000;transform:scaleX(0.89);transform-origin:0 0">Unité Mesure</div>
<div class="a" style="left:924px;top:241px;width:1px;height:560px;background:#9a9a9a"></div>
<div class="a" style="left:371px;top:241px;width:553px;height:16px;background:#ffffff;border-bottom:1px dotted #a8a8a8"></div>
<div class="a" style="left:435px;top:241px;width:1px;height:16px;border-left:1px dotted #c0c0c0"></div>
<div class="t" style="left:373px;top:242.6px;font-size:12px;color:#e00000;transform:scaleX(0.86);transform-origin:0 0;text-decoration:line-through;">ACIER</div>
<div class="t" style="left:439px;top:242.6px;font-size:12px;color:#e00000;transform:scaleX(0.86);transform-origin:0 0;text-decoration:line-through;">MEN</div>
<div class="a" style="left:371px;top:257px;width:553px;height:16px;background:#efefef;border-bottom:1px dotted #a8a8a8"></div>
<div class="a" style="left:435px;top:257px;width:1px;height:16px;border-left:1px dotted #c0c0c0"></div>
<div class="t" style="left:373px;top:258.6px;font-size:12px;color:#000;transform:scaleX(0.86);transform-origin:0 0;">ACIER</div>
<div class="t" style="left:439px;top:258.6px;font-size:12px;color:#000;transform:scaleX(0.86);transform-origin:0 0;">NbPOR</div>
<div class="a" style="left:371px;top:273px;width:553px;height:16px;background:#ffffff;border-bottom:1px dotted #a8a8a8"></div>
<div class="a" style="left:435px;top:273px;width:1px;height:16px;border-left:1px dotted #c0c0c0"></div>
<div class="t" style="left:373px;top:274.6px;font-size:12px;color:#000;transform:scaleX(0.86);transform-origin:0 0;">ACIER</div>
<div class="t" style="left:439px;top:274.6px;font-size:12px;color:#000;transform:scaleX(0.86);transform-origin:0 0;">NbPORTA</div>
<div class="a" style="left:371px;top:289px;width:553px;height:16px;background:#efefef;border-bottom:1px dotted #a8a8a8"></div>
<div class="a" style="left:435px;top:289px;width:1px;height:16px;border-left:1px dotted #c0c0c0"></div>
<div class="t" style="left:373px;top:290.6px;font-size:12px;color:#e00000;transform:scaleX(0.86);transform-origin:0 0;text-decoration:line-through;">ALU</div>
<div class="t" style="left:439px;top:290.6px;font-size:12px;color:#e00000;transform:scaleX(0.86);transform-origin:0 0;text-decoration:line-through;">MEN</div>
<div class="a" style="left:371px;top:305px;width:553px;height:16px;background:#ffffff;border-bottom:1px dotted #a8a8a8"></div>
<div class="a" style="left:435px;top:305px;width:1px;height:16px;border-left:1px dotted #c0c0c0"></div>
<div class="t" style="left:373px;top:306.6px;font-size:12px;color:#000;transform:scaleX(0.86);transform-origin:0 0;">ALU</div>
<div class="t" style="left:439px;top:306.6px;font-size:12px;color:#000;transform:scaleX(0.86);transform-origin:0 0;">NbCoul</div>
<div class="a" style="left:371px;top:321px;width:553px;height:16px;background:#efefef;border-bottom:1px dotted #a8a8a8"></div>
<div class="a" style="left:435px;top:321px;width:1px;height:16px;border-left:1px dotted #c0c0c0"></div>
<div class="t" style="left:373px;top:322.6px;font-size:12px;color:#000;transform:scaleX(0.86);transform-origin:0 0;">ALU</div>
<div class="t" style="left:439px;top:322.6px;font-size:12px;color:#000;transform:scaleX(0.86);transform-origin:0 0;">NbFRA</div>
<div class="a" style="left:371px;top:337px;width:553px;height:16px;background:#ffffff;border-bottom:1px dotted #a8a8a8"></div>
<div class="a" style="left:435px;top:337px;width:1px;height:16px;border-left:1px dotted #c0c0c0"></div>
<div class="t" style="left:373px;top:338.6px;font-size:12px;color:#000;transform:scaleX(0.86);transform-origin:0 0;">ALU</div>
<div class="t" style="left:439px;top:338.6px;font-size:12px;color:#000;transform:scaleX(0.86);transform-origin:0 0;">NbGAL</div>
<div class="a" style="left:371px;top:353px;width:553px;height:16px;background:#efefef;border-bottom:1px dotted #a8a8a8"></div>
<div class="a" style="left:435px;top:353px;width:1px;height:16px;border-left:1px dotted #c0c0c0"></div>
<div class="t" style="left:373px;top:354.6px;font-size:12px;color:#000;transform:scaleX(0.86);transform-origin:0 0;">ALU</div>
<div class="t" style="left:439px;top:354.6px;font-size:12px;color:#000;transform:scaleX(0.86);transform-origin:0 0;">NbMEN</div>
<div class="a" style="left:371px;top:369px;width:553px;height:16px;background:#ffffff;border-bottom:1px dotted #a8a8a8"></div>
<div class="a" style="left:435px;top:369px;width:1px;height:16px;border-left:1px dotted #c0c0c0"></div>
<div class="t" style="left:373px;top:370.6px;font-size:12px;color:#000;transform:scaleX(0.86);transform-origin:0 0;">ALU</div>
<div class="t" style="left:439px;top:370.6px;font-size:12px;color:#000;transform:scaleX(0.86);transform-origin:0 0;">NbPOR</div>
<div class="a" style="left:371px;top:385px;width:553px;height:16px;background:#efefef;border-bottom:1px dotted #a8a8a8"></div>
<div class="a" style="left:435px;top:385px;width:1px;height:16px;border-left:1px dotted #c0c0c0"></div>
<div class="t" style="left:373px;top:386.6px;font-size:12px;color:#000;transform:scaleX(0.86);transform-origin:0 0;">ALU</div>
<div class="t" style="left:439px;top:386.6px;font-size:12px;color:#000;transform:scaleX(0.86);transform-origin:0 0;">NbPORTA</div>
<div class="a" style="left:371px;top:401px;width:553px;height:16px;background:#ffffff;border-bottom:1px dotted #a8a8a8"></div>
<div class="a" style="left:435px;top:401px;width:1px;height:16px;border-left:1px dotted #c0c0c0"></div>
<div class="t" style="left:373px;top:402.6px;font-size:12px;color:#000;transform:scaleX(0.86);transform-origin:0 0;">ALU</div>
<div class="t" style="left:439px;top:402.6px;font-size:12px;color:#000;transform:scaleX(0.86);transform-origin:0 0;">UN</div>
<div class="a" style="left:371px;top:417px;width:553px;height:16px;background:#a9cbeb;border-bottom:1px dotted #a8a8a8"></div>
<div class="a" style="left:435px;top:417px;width:1px;height:16px;border-left:1px dotted #c0c0c0"></div>
<div class="t" style="left:373px;top:418.6px;font-size:12px;color:#0b2a5a;transform:scaleX(0.86);transform-origin:0 0;">ASSSPE</div>
<div class="t" style="left:439px;top:418.6px;font-size:12px;color:#0b2a5a;transform:scaleX(0.86);transform-origin:0 0;">HEURE</div>
<div class="a" style="left:371px;top:417px;width:553px;height:1px;border-top:1px dotted #4a3020"></div>
<div class="a" style="left:371px;top:431px;width:553px;height:1px;border-top:1px dotted #4a3020"></div>
<div class="a" style="left:371px;top:433px;width:553px;height:16px;background:#ffffff;border-bottom:1px dotted #a8a8a8"></div>
<div class="a" style="left:435px;top:433px;width:1px;height:16px;border-left:1px dotted #c0c0c0"></div>
<div class="t" style="left:373px;top:434.6px;font-size:12px;color:#000;transform:scaleX(0.86);transform-origin:0 0;">BOIS</div>
<div class="t" style="left:439px;top:434.6px;font-size:12px;color:#000;transform:scaleX(0.86);transform-origin:0 0;">NbMEN</div>
<div class="a" style="left:371px;top:449px;width:553px;height:16px;background:#efefef;border-bottom:1px dotted #a8a8a8"></div>
<div class="a" style="left:435px;top:449px;width:1px;height:16px;border-left:1px dotted #c0c0c0"></div>
<div class="t" style="left:373px;top:450.6px;font-size:12px;color:#000;transform:scaleX(0.86);transform-origin:0 0;">BOIS</div>
<div class="t" style="left:439px;top:450.6px;font-size:12px;color:#000;transform:scaleX(0.86);transform-origin:0 0;">NbPOR</div>
<div class="a" style="left:371px;top:465px;width:553px;height:16px;background:#ffffff;border-bottom:1px dotted #a8a8a8"></div>
<div class="a" style="left:435px;top:465px;width:1px;height:16px;border-left:1px dotted #c0c0c0"></div>
<div class="t" style="left:373px;top:466.6px;font-size:12px;color:#000;transform:scaleX(0.86);transform-origin:0 0;">DEBSPE</div>
<div class="t" style="left:439px;top:466.6px;font-size:12px;color:#000;transform:scaleX(0.86);transform-origin:0 0;">HEURE</div>
<div class="a" style="left:371px;top:481px;width:553px;height:16px;background:#efefef;border-bottom:1px dotted #a8a8a8"></div>
<div class="a" style="left:435px;top:481px;width:1px;height:16px;border-left:1px dotted #c0c0c0"></div>
<div class="t" style="left:373px;top:482.6px;font-size:12px;color:#000;transform:scaleX(0.86);transform-origin:0 0;">EMBSPE</div>
<div class="t" style="left:439px;top:482.6px;font-size:12px;color:#000;transform:scaleX(0.86);transform-origin:0 0;">HEURE</div>
<div class="a" style="left:371px;top:497px;width:553px;height:16px;background:#ffffff;border-bottom:1px dotted #a8a8a8"></div>
<div class="a" style="left:435px;top:497px;width:1px;height:16px;border-left:1px dotted #c0c0c0"></div>
<div class="t" style="left:373px;top:498.6px;font-size:12px;color:#e00000;transform:scaleX(0.86);transform-origin:0 0;text-decoration:line-through;">MIXTE</div>
<div class="t" style="left:439px;top:498.6px;font-size:12px;color:#e00000;transform:scaleX(0.86);transform-origin:0 0;text-decoration:line-through;">MEN</div>
<div class="a" style="left:371px;top:513px;width:553px;height:16px;background:#efefef;border-bottom:1px dotted #a8a8a8"></div>
<div class="a" style="left:435px;top:513px;width:1px;height:16px;border-left:1px dotted #c0c0c0"></div>
<div class="t" style="left:373px;top:514.6px;font-size:12px;color:#000;transform:scaleX(0.86);transform-origin:0 0;">MIXTE</div>
<div class="t" style="left:439px;top:514.6px;font-size:12px;color:#000;transform:scaleX(0.86);transform-origin:0 0;">NbMEN</div>
<div class="a" style="left:371px;top:529px;width:553px;height:16px;background:#ffffff;border-bottom:1px dotted #a8a8a8"></div>
<div class="a" style="left:435px;top:529px;width:1px;height:16px;border-left:1px dotted #c0c0c0"></div>
<div class="t" style="left:373px;top:530.6px;font-size:12px;color:#000;transform:scaleX(0.86);transform-origin:0 0;">MIXTE</div>
<div class="t" style="left:439px;top:530.6px;font-size:12px;color:#000;transform:scaleX(0.86);transform-origin:0 0;">NbPOR</div>
<div class="a" style="left:371px;top:545px;width:553px;height:16px;background:#efefef;border-bottom:1px dotted #a8a8a8"></div>
<div class="a" style="left:435px;top:545px;width:1px;height:16px;border-left:1px dotted #c0c0c0"></div>
<div class="t" style="left:373px;top:546.6px;font-size:12px;color:#000;transform:scaleX(0.86);transform-origin:0 0;">PG</div>
<div class="t" style="left:439px;top:546.6px;font-size:12px;color:#000;transform:scaleX(0.86);transform-origin:0 0;">NbPG</div>
<div class="a" style="left:371px;top:561px;width:553px;height:16px;background:#ffffff;border-bottom:1px dotted #a8a8a8"></div>
<div class="a" style="left:435px;top:561px;width:1px;height:16px;border-left:1px dotted #c0c0c0"></div>
<div class="t" style="left:373px;top:562.6px;font-size:12px;color:#000;transform:scaleX(0.86);transform-origin:0 0;">PVC</div>
<div class="t" style="left:439px;top:562.6px;font-size:12px;color:#000;transform:scaleX(0.86);transform-origin:0 0;">MEN</div>
<div class="a" style="left:371px;top:577px;width:553px;height:16px;background:#efefef;border-bottom:1px dotted #a8a8a8"></div>
<div class="a" style="left:435px;top:577px;width:1px;height:16px;border-left:1px dotted #c0c0c0"></div>
<div class="t" style="left:373px;top:578.6px;font-size:12px;color:#000;transform:scaleX(0.86);transform-origin:0 0;">PVC</div>
<div class="t" style="left:439px;top:578.6px;font-size:12px;color:#000;transform:scaleX(0.86);transform-origin:0 0;">NbCoul</div>
<div class="a" style="left:371px;top:593px;width:553px;height:16px;background:#ffffff;border-bottom:1px dotted #a8a8a8"></div>
<div class="a" style="left:435px;top:593px;width:1px;height:16px;border-left:1px dotted #c0c0c0"></div>
<div class="t" style="left:373px;top:594.6px;font-size:12px;color:#000;transform:scaleX(0.86);transform-origin:0 0;">PVC</div>
<div class="t" style="left:439px;top:594.6px;font-size:12px;color:#000;transform:scaleX(0.86);transform-origin:0 0;">NbFRA</div>
<div class="a" style="left:371px;top:609px;width:553px;height:16px;background:#efefef;border-bottom:1px dotted #a8a8a8"></div>
<div class="a" style="left:435px;top:609px;width:1px;height:16px;border-left:1px dotted #c0c0c0"></div>
<div class="t" style="left:373px;top:610.6px;font-size:12px;color:#000;transform:scaleX(0.86);transform-origin:0 0;">PVC</div>
<div class="t" style="left:439px;top:610.6px;font-size:12px;color:#000;transform:scaleX(0.86);transform-origin:0 0;">NbGAL</div>
<div class="a" style="left:371px;top:625px;width:553px;height:16px;background:#ffffff;border-bottom:1px dotted #a8a8a8"></div>
<div class="a" style="left:435px;top:625px;width:1px;height:16px;border-left:1px dotted #c0c0c0"></div>
<div class="t" style="left:373px;top:626.6px;font-size:12px;color:#000;transform:scaleX(0.86);transform-origin:0 0;">PVC</div>
<div class="t" style="left:439px;top:626.6px;font-size:12px;color:#000;transform:scaleX(0.86);transform-origin:0 0;">NbMEN</div>
<div class="a" style="left:371px;top:641px;width:553px;height:16px;background:#efefef;border-bottom:1px dotted #a8a8a8"></div>
<div class="a" style="left:435px;top:641px;width:1px;height:16px;border-left:1px dotted #c0c0c0"></div>
<div class="t" style="left:373px;top:642.6px;font-size:12px;color:#000;transform:scaleX(0.86);transform-origin:0 0;">PVC</div>
<div class="t" style="left:439px;top:642.6px;font-size:12px;color:#000;transform:scaleX(0.86);transform-origin:0 0;">NbPOR</div>
<div class="a" style="left:371px;top:657px;width:553px;height:16px;background:#ffffff;border-bottom:1px dotted #a8a8a8"></div>
<div class="a" style="left:435px;top:657px;width:1px;height:16px;border-left:1px dotted #c0c0c0"></div>
<div class="t" style="left:373px;top:658.6px;font-size:12px;color:#000;transform:scaleX(0.86);transform-origin:0 0;">PVC</div>
<div class="t" style="left:439px;top:658.6px;font-size:12px;color:#000;transform:scaleX(0.86);transform-origin:0 0;">NbPORTA</div>
<div class="a" style="left:371px;top:673px;width:553px;height:16px;background:#efefef;border-bottom:1px dotted #a8a8a8"></div>
<div class="a" style="left:435px;top:673px;width:1px;height:16px;border-left:1px dotted #c0c0c0"></div>
<div class="t" style="left:373px;top:674.6px;font-size:12px;color:#000;transform:scaleX(0.86);transform-origin:0 0;">PVC</div>
<div class="t" style="left:439px;top:674.6px;font-size:12px;color:#000;transform:scaleX(0.86);transform-origin:0 0;">NCaFBI</div>
<div class="a" style="left:371px;top:689px;width:553px;height:16px;background:#ffffff;border-bottom:1px dotted #a8a8a8"></div>
<div class="a" style="left:435px;top:689px;width:1px;height:16px;border-left:1px dotted #c0c0c0"></div>
<div class="t" style="left:373px;top:690.6px;font-size:12px;color:#000;transform:scaleX(0.86);transform-origin:0 0;">PVC</div>
<div class="t" style="left:439px;top:690.6px;font-size:12px;color:#000;transform:scaleX(0.86);transform-origin:0 0;">UMLLP</div>
<div class="a" style="left:371px;top:705px;width:553px;height:16px;background:#efefef;border-bottom:1px dotted #a8a8a8"></div>
<div class="a" style="left:435px;top:705px;width:1px;height:16px;border-left:1px dotted #c0c0c0"></div>
<div class="t" style="left:373px;top:706.6px;font-size:12px;color:#000;transform:scaleX(0.86);transform-origin:0 0;">PVC</div>
<div class="t" style="left:439px;top:706.6px;font-size:12px;color:#000;transform:scaleX(0.86);transform-origin:0 0;">UN</div>
<div class="a" style="left:371px;top:721px;width:553px;height:16px;background:#ffffff;border-bottom:1px dotted #a8a8a8"></div>
<div class="a" style="left:435px;top:721px;width:1px;height:16px;border-left:1px dotted #c0c0c0"></div>
<div class="t" style="left:373px;top:722.6px;font-size:12px;color:#e00000;transform:scaleX(0.86);transform-origin:0 0;text-decoration:line-through;">U1</div>
<div class="t" style="left:439px;top:722.6px;font-size:12px;color:#e00000;transform:scaleX(0.86);transform-origin:0 0;text-decoration:line-through;">UC</div>
<div class="a" style="left:371px;top:737px;width:553px;height:16px;background:#efefef;border-bottom:1px dotted #a8a8a8"></div>
<div class="a" style="left:435px;top:737px;width:1px;height:16px;border-left:1px dotted #c0c0c0"></div>
<div class="t" style="left:373px;top:738.6px;font-size:12px;color:#000;transform:scaleX(0.86);transform-origin:0 0;">VR</div>
<div class="t" style="left:439px;top:738.6px;font-size:12px;color:#000;transform:scaleX(0.86);transform-origin:0 0;">NbrArt</div>
<div class="a" style="left:371px;top:753px;width:553px;height:16px;background:#ffffff;border-bottom:1px dotted #a8a8a8"></div>
<div class="a" style="left:435px;top:753px;width:1px;height:16px;border-left:1px dotted #c0c0c0"></div>
<div class="t" style="left:373px;top:754.6px;font-size:12px;color:#000;transform:scaleX(0.86);transform-origin:0 0;">VR</div>
<div class="t" style="left:439px;top:754.6px;font-size:12px;color:#000;transform:scaleX(0.86);transform-origin:0 0;">NbrVr</div>
<div class="a" style="left:371px;top:769px;width:553px;height:16px;background:#efefef;border-bottom:1px dotted #a8a8a8"></div>
<div class="a" style="left:435px;top:769px;width:1px;height:16px;border-left:1px dotted #c0c0c0"></div>
<div class="t" style="left:373px;top:770.6px;font-size:12px;color:#000;transform:scaleX(0.86);transform-origin:0 0;">VR</div>
<div class="t" style="left:439px;top:770.6px;font-size:12px;color:#000;transform:scaleX(0.86);transform-origin:0 0;">NbVRI</div>
<div class="a" style="left:371px;top:785px;width:553px;height:16px;background:#ffffff;border-bottom:1px dotted #a8a8a8"></div>
<div class="a" style="left:435px;top:785px;width:1px;height:16px;border-left:1px dotted #c0c0c0"></div>
<div class="t" style="left:373px;top:786.6px;font-size:12px;color:#000;transform:scaleX(0.86);transform-origin:0 0;">VR</div>
<div class="t" style="left:439px;top:786.6px;font-size:12px;color:#000;transform:scaleX(0.86);transform-origin:0 0;">Un</div>
<div class="a" style="left:371px;top:800px;width:554px;height:1px;background:#9a9a9a"></div>
<div class="a" style="left:1144px;top:217px;width:447px;height:27px;background:linear-gradient(#f0f0f0,#fbfbfb)"></div>
<div class="a" style="left:1150px;top:244px;width:441px;height:568px;background:#f0f0f0;border-top:1px solid #a0a0a0;border-left:1px solid #a0a0a0"></div>
<svg class="a" style="left:1154px;top:225px" width="82" height="21"><defs><linearGradient id="dg" x1="0" y1="0" x2="0" y2="1"><stop offset="0" stop-color="#ffffff"/><stop offset="1" stop-color="#f0f0f0"/></linearGradient></defs><path d="M0.5 20.5L11 3Q13 0.5 16 0.5H65Q68 0.5 70 3L80.5 20.5" fill="url(#dg)" stroke="#a0a0a0" stroke-width="1"/><rect x="1" y="19.5" width="79" height="2" fill="#f0f0f0"/></svg>
<div class="t" style="left:1167px;top:229px;font-size:12px;font-weight:bold;color:#000">Définition</div>
<div class="t" style="right:364px;top:251.8px;font-size:12px;color:#000;transform:scaleX(0.87);transform-origin:100% 0">Ressource</div>
<div class="t" style="left:1243px;top:251.8px;font-size:12px;color:#000;color:#000;transform:scaleX(0.87);transform-origin:0 0">ASSSPE</div>
<div class="a" style="left:1408px;top:250px;width:14px;height:14px;background:#c8c8c8;border:1px solid #bdbdbd"></div>
<div class="t" style="left:1411px;top:252px;font-size:11px;font-weight:bold;color:#f0f0f0">?</div>
<div class="t" style="left:1428px;top:251.8px;font-size:12px;color:#000;color:#000;transform:scaleX(0.87);transform-origin:0 0">Assemblage produit Spécifique</div>
<div class="t" style="right:364px;top:270.8px;font-size:12px;color:#000;transform:scaleX(0.87);transform-origin:100% 0">Unité Mesure</div>
<div class="t" style="left:1243px;top:270.8px;font-size:12px;color:#000;color:#000;transform:scaleX(0.87);transform-origin:0 0">HEURE</div>
<div class="a" style="left:1318px;top:269px;width:14px;height:14px;background:#c8c8c8;border:1px solid #bdbdbd"></div>
<div class="t" style="left:1321px;top:271px;font-size:11px;font-weight:bold;color:#f0f0f0">?</div>
<div class="t" style="left:1338px;top:270.8px;font-size:12px;color:#000;color:#000;transform:scaleX(0.87);transform-origin:0 0">Heures</div>
<div class="t" style="right:364px;top:289.8px;font-size:12px;color:#000;transform:scaleX(0.87);transform-origin:100% 0">Etat</div>
<div class="t" style="left:1243px;top:289.8px;font-size:12px;color:#000;color:#000;transform:scaleX(0.87);transform-origin:0 0">V</div>
<div class="t" style="right:364px;top:308.8px;font-size:12px;color:#000;transform:scaleX(0.87);transform-origin:100% 0">Cal. de Base</div>
<div class="t" style="left:1243px;top:308.8px;font-size:12px;color:#000;color:#000;transform:scaleX(0.87);transform-origin:0 0">Standard</div>
<div class="t" style="left:1332px;top:308.8px;font-size:12px;color:#000;color:#000;transform:scaleX(0.87);transform-origin:0 0">Calendrier 5 jours ouvrés</div>
<div class="t" style="right:364px;top:327.8px;font-size:12px;color:#000;transform:scaleX(0.87);transform-origin:100% 0">Pre. de Base</div>
<div class="t" style="left:1243px;top:327.8px;font-size:12px;color:#000;color:#000;transform:scaleX(0.87);transform-origin:0 0">jours</div>
<div class="t" style="left:1332px;top:327.8px;font-size:12px;color:#000;color:#000;transform:scaleX(0.87);transform-origin:0 0">Presentation par jours</div>
<div class="t" style="right:364px;top:348.8px;font-size:12px;color:#000;transform:scaleX(0.87);transform-origin:100% 0">Prés.Comp.</div>
<div class="a" style="left:1241px;top:345px;width:24px;height:24px;background:#cbcbcb;border:1px solid #c2c2c2"></div>
<svg class="a" style="left:1241px;top:345px" width="24" height="24"><path d="M12.5 3H20.5L19.5 5H11.5Z" fill="#a2a2a2"/><path d="M11.5 5L5.5 14.5M14 5.5L8.5 14.5M19.5 5L16.5 14M14.5 10.5V13.8H16" stroke="#f6f6f6" stroke-width="1.3" fill="none"/><path d="M12.5 5.5L7 14.5M15.5 6L10 14.5" stroke="#b4b4b4" stroke-width="0.8" fill="none"/><path d="M5 16H10.5L9.5 18.5H4Z" fill="#a2a2a2"/><path d="M4.5 19.5H9.5" stroke="#f6f6f6" stroke-width="1"/></svg>
<div class="t" style="left:1268px;top:348.8px;font-size:12px;color:#000;color:#000;transform:scaleX(0.87);transform-origin:0 0">semaines,joursnonex</div>
<div class="t" style="right:364px;top:374.8px;font-size:12px;color:#000;transform:scaleX(0.87);transform-origin:100% 0">Gestion Capa</div>
<div class="a" style="left:1240px;top:375px;width:10px;height:10px;border:1px solid #c4c4c4;background:#fafafa"></div>
<svg class="a" style="left:1241px;top:376px" width="8" height="8"><path d="M1.5 4L3.5 6L6.8 1.8" stroke="#b8b8b8" stroke-width="1" fill="none"/></svg>
<div class="t" style="right:364px;top:395.8px;font-size:12px;color:#000;transform:scaleX(0.87);transform-origin:100% 0">Capa.Cum.</div>
<div class="a" style="left:1241px;top:392px;width:24px;height:24px;background:#cbcbcb;border:1px solid #c2c2c2"></div>
<svg class="a" style="left:1241px;top:392px" width="24" height="24"><path d="M12.5 3H20.5L19.5 5H11.5Z" fill="#a2a2a2"/><path d="M11.5 5L5.5 14.5M14 5.5L8.5 14.5M19.5 5L16.5 14M14.5 10.5V13.8H16" stroke="#f6f6f6" stroke-width="1.3" fill="none"/><path d="M12.5 5.5L7 14.5M15.5 6L10 14.5" stroke="#b4b4b4" stroke-width="0.8" fill="none"/><path d="M5 16H10.5L9.5 18.5H4Z" fill="#a2a2a2"/><path d="M4.5 19.5H9.5" stroke="#f6f6f6" stroke-width="1"/></svg>
<div class="t" style="right:364px;top:423.8px;font-size:12px;color:#000;transform:scaleX(0.87);transform-origin:100% 0">Capa.Det.</div>
<div class="a" style="left:1241px;top:420px;width:24px;height:24px;background:#cbcbcb;border:1px solid #c2c2c2"></div>
<svg class="a" style="left:1241px;top:420px" width="24" height="24"><path d="M12.5 3H20.5L19.5 5H11.5Z" fill="#a2a2a2"/><path d="M11.5 5L5.5 14.5M14 5.5L8.5 14.5M19.5 5L16.5 14M14.5 10.5V13.8H16" stroke="#f6f6f6" stroke-width="1.3" fill="none"/><path d="M12.5 5.5L7 14.5M15.5 6L10 14.5" stroke="#b4b4b4" stroke-width="0.8" fill="none"/><path d="M5 16H10.5L9.5 18.5H4Z" fill="#a2a2a2"/><path d="M4.5 19.5H9.5" stroke="#f6f6f6" stroke-width="1"/></svg>
<div class="t" style="right:364px;top:451.8px;font-size:12px;color:#000;transform:scaleX(0.87);transform-origin:100% 0">Char.Cum.</div>
<div class="a" style="left:1241px;top:448px;width:24px;height:24px;background:#cbcbcb;border:1px solid #c2c2c2"></div>
<svg class="a" style="left:1241px;top:448px" width="24" height="24"><path d="M12.5 3H20.5L19.5 5H11.5Z" fill="#a2a2a2"/><path d="M11.5 5L5.5 14.5M14 5.5L8.5 14.5M19.5 5L16.5 14M14.5 10.5V13.8H16" stroke="#f6f6f6" stroke-width="1.3" fill="none"/><path d="M12.5 5.5L7 14.5M15.5 6L10 14.5" stroke="#b4b4b4" stroke-width="0.8" fill="none"/><path d="M5 16H10.5L9.5 18.5H4Z" fill="#a2a2a2"/><path d="M4.5 19.5H9.5" stroke="#f6f6f6" stroke-width="1"/></svg>
<div class="t" style="right:364px;top:479.8px;font-size:12px;color:#000;transform:scaleX(0.87);transform-origin:100% 0">Char.Det.</div>
<div class="a" style="left:1241px;top:476px;width:24px;height:24px;background:#cbcbcb;border:1px solid #c2c2c2"></div>
<svg class="a" style="left:1241px;top:476px" width="24" height="24"><path d="M12.5 3H20.5L19.5 5H11.5Z" fill="#a2a2a2"/><path d="M11.5 5L5.5 14.5M14 5.5L8.5 14.5M19.5 5L16.5 14M14.5 10.5V13.8H16" stroke="#f6f6f6" stroke-width="1.3" fill="none"/><path d="M12.5 5.5L7 14.5M15.5 6L10 14.5" stroke="#b4b4b4" stroke-width="0.8" fill="none"/><path d="M5 16H10.5L9.5 18.5H4Z" fill="#a2a2a2"/><path d="M4.5 19.5H9.5" stroke="#f6f6f6" stroke-width="1"/></svg>
<div class="t" style="right:364px;top:507.8px;font-size:12px;color:#000;transform:scaleX(0.87);transform-origin:100% 0">Capa.Def.</div>
<div class="a" style="left:1240px;top:503px;width:278px;height:20px;background:#cccccc;border:1px solid #c4c4c4"></div>
<div class="t" style="left:1244px;top:506.8px;font-size:12px;color:#000;color:#8a8a8a;transform:scaleX(0.87);transform-origin:0 0">[0] Cumul</div>
<svg class="a" style="left:1503px;top:510px" width="10" height="6"><path d="M0.5 0.5L5 5L9.5 0.5" stroke="#9a9a9a" stroke-width="1" fill="none"/></svg>
<div class="t" style="right:364px;top:530.8px;font-size:12px;color:#000;transform:scaleX(0.87);transform-origin:100% 0">Char.Def.</div>
<div class="a" style="left:1240px;top:526px;width:278px;height:20px;background:#cccccc;border:1px solid #c4c4c4"></div>
<div class="t" style="left:1244px;top:529.8px;font-size:12px;color:#000;color:#8a8a8a;transform:scaleX(0.87);transform-origin:0 0">[0] Cumul</div>
<svg class="a" style="left:1503px;top:533px" width="10" height="6"><path d="M0.5 0.5L5 5L9.5 0.5" stroke="#9a9a9a" stroke-width="1" fill="none"/></svg>
<div class="a" style="left:520px;top:422px;width:288px;height:291px;background:#f2f2f2;border:1px solid #a0a0a0;box-shadow:1px 1px 1px 1px rgba(0,0,0,0.38), 2px 2px 3px rgba(0,0,0,0.15)"></div>
<div class="a" style="left:521px;top:423px;width:30px;height:289px;background:#f0f0f0"></div>
<div class="a" style="left:551px;top:538px;width:254px;height:1px;background:#d4d4d4"></div>
<div class="a" style="left:551px;top:633px;width:254px;height:1px;background:#d4d4d4"></div>
<div class="a" style="left:551px;top:662px;width:254px;height:1px;background:#d4d4d4"></div>
<div class="a" style="left:533px;top:564px;width:272px;height:22px;background:#91c9f7"></div>
<div class="a" style="left:538px;top:564px;width:136px;height:23px;background:#9098f2"></div>
<div class="a" style="left:538px;top:585px;width:136px;height:2px;background:#e8a0f0"></div>
<div class="t" style="left:555px;top:430.6px;font-size:11.3px;color:#000">Création (F9)</div>
<div class="t" style="left:555px;top:452.6px;font-size:11.3px;color:#000">Modification (F1)</div>
<div class="t" style="left:555px;top:474.4px;font-size:11.3px;color:#000">Duplication (F7)</div>
<div class="t" style="left:555px;top:496.2px;font-size:11.3px;color:#000">Suppression Logique (F6)</div>
<div class="t" style="left:555px;top:518.0px;font-size:11.3px;color:#000">Détail (F8)</div>
<div class="t" style="left:555px;top:548.7px;font-size:11.3px;color:#8c8c8c">Remplacement Unité de Mesure (F11)</div>
<div class="t" style="left:555px;top:569.9px;font-size:11.3px;color:#000">Capacités Défaut</div>
<div class="t" style="left:555px;top:591.7px;font-size:11.3px;color:#000">Capacités Forcées</div>
<div class="t" style="left:555px;top:613.5px;font-size:11.3px;color:#000">Purge Capacités Défaut et Forcées</div>
<div class="t" style="left:555px;top:642.3px;font-size:11.3px;color:#000">MAJ Cohérence Planification</div>
<div class="t" style="left:555px;top:671.5px;font-size:11.3px;color:#000">Définition Filtres et Tris</div>
<div class="t" style="left:555px;top:693.7px;font-size:11.3px;color:#000">Condition par Défaut</div>
<div class="a" style="left:504px;top:557px;width:30px;height:30px;border-radius:50%;background:#ee1010"></div>
<div class="t" style="left:513px;top:564px;font-size:16px;color:#fff">2</div>
<svg class="a" style="left:653px;top:572px" width="14" height="21"><path d="M1 1V16L4.5 12.5L7.5 19L10 18L7 11.5H12Z" fill="#f4a8f4" stroke="#222" stroke-width="1"/></svg>
</body></html>
